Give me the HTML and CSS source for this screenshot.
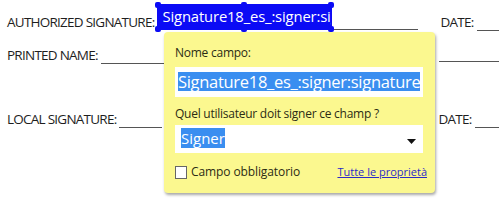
FILE: index.html
```html
<!DOCTYPE html>
<html lang="it">
<head>
    <meta charset="UTF-8">
    <title>Campo firma</title>
    <link rel="stylesheet" href="styles.css">
</head>
<body>

    <!-- Form page -->
    <div class="form">
        <div class="row row-auth">
            <span class="label">AUTHORIZED SIGNATURE:</span>
            <span class="sig-field">
                <span class="sig-text">Signature18_es_:signer:signature</span>
                <i class="handle tl"></i><i class="handle tm"></i><i class="handle tr"></i>
                <i class="handle bl"></i><i class="handle bm"></i><i class="handle br"></i>
            </span>
            <span class="line line-sig"></span>
            <span class="label date">DATE:</span>
            <span class="line grow"></span>
        </div>

        <div class="row row-name">
            <span class="label">PRINTED NAME:</span>
            <span class="line line-name"></span>
            <span class="gap"></span>
            <span class="line grow"></span>
        </div>

        <div class="row row-local">
            <span class="label">LOCAL SIGNATURE:</span>
            <span class="line line-local"></span>
            <span class="gap"></span>
            <span class="label">DATE:</span>
            <span class="line grow"></span>
        </div>
    </div>

    <!-- Field popup -->
    <div class="popup">
        <div class="popup-label">Nome campo:</div>
        <div class="text-box"><span class="selected">Signature18_es_:signer:signature</span></div>

        <div class="popup-label second">Quel utilisateur doit signer ce champ ?</div>
        <div class="select-box">
            <span class="selected">Signer</span>
            <svg class="arrow" width="9" height="5" viewBox="0 0 9 5"><path d="M0 0h9L4.5 5z" fill="#111"/></svg>
        </div>

        <div class="popup-footer">
            <label class="check"><span class="box"></span>Campo obbligatorio</label>
            <a href="#" class="all-props">Tutte le proprietà</a>
        </div>
    </div>

</body>
</html>
```

FILE: styles.css
```css
body {
    margin: 0;
    background: #fff;
    font-family: "Open Sans", Arial, sans-serif;
    color: #333;
    width: 499px;
    height: 204px;
    overflow: hidden;
    position: relative;
}
.form {
    padding-left: 7px;
}
.row {
    display: flex;
    align-items: flex-end;
}
.row-auth {
    height: 31px;
}
.row-name {
    height: 33px;
}
.row-local {
    height: 64px;
}
.label {
    font-size: 13.5px;
    letter-spacing: -0.75px;
    line-height: 15px;
    color: #1e1e1e;
    white-space: nowrap;
    padding-bottom: 1px;
}
.line {
    border-bottom: 1px solid #555;
    height: 0;
}
.line-sig {
    width: 86px;
    margin-bottom: 1px;
}
.line-name {
    width: 63px;
    margin-left: 3px;
}
.line-local {
    width: 43px;
    margin-left: 2px;
}
.gap {
    width: 272px;
}
.row-local .gap {
    width: 277px;
}
.date {
    margin-left: 23px;
}
.grow {
    flex: 1;
    margin-left: 3px;
}
.row-name .grow {
    margin-bottom: 2px;
}
.sig-field {
    position: relative;
    width: 175px;
    height: 26px;
    margin-left: 2px;
    margin-bottom: 1px;
    background: #0b0bf5;
    border-radius: 3px;
    color: #fff;
    box-sizing: border-box;
    padding: 0 1px 0 6px;
}
.sig-text {
    display: block;
    overflow: hidden;
    white-space: nowrap;
    font-size: 14.8px;
    line-height: 24px;
    letter-spacing: -0.15px;
}
.handle {
    position: absolute;
    width: 6px;
    height: 6px;
    background: #0b0bf5;
    border-radius: 2px;
}
.tl { left: -2px; top: -2px; }
.tm { left: 84px; top: -2px; }
.tr { right: -2px; top: -2px; }
.bl { left: -2px; bottom: -2px; }
.bm { left: 84px; bottom: -2px; }
.br { right: -2px; bottom: -2px; }

/* popup */
.popup {
    position: absolute;
    left: 164px;
    top: 32px;
    width: 271px;
    height: 161px;
    box-sizing: border-box;
    padding: 13px 11px 0 11px;
    background: #fbf88f;
    border-radius: 4px;
    box-shadow: 1px 2px 3px rgba(0, 0, 0, 0.35);
    color: #2c2c14;
}
.popup-label {
    font-size: 12px;
    line-height: 15px;
    letter-spacing: -0.25px;
}
.popup-label.second {
    margin-top: 9px;
}
.text-box {
    margin-top: 7px;
    height: 30px;
    width: 248px;
    background: #fff;
    box-sizing: border-box;
    padding: 4px 0 0 3px;
    overflow: hidden;
}
.text-box .selected {
    font-size: 16.5px;
    line-height: 19px;
    letter-spacing: -0.3px;
    white-space: nowrap;
}
.selected {
    background: #3a8ef0;
    color: #fff;
    display: inline-block;
}
.select-box {
    margin-top: 4px;
    height: 28px;
    width: 248px;
    background: #fff;
    box-sizing: border-box;
    padding: 3px 0 0 6px;
    display: flex;
    align-items: flex-start;
    justify-content: space-between;
}
.select-box .selected {
    font-size: 15px;
    line-height: 20px;
}
.arrow {
    margin: 11px 7px 0 0;
}
.popup-footer {
    margin-top: 11px;
    display: flex;
    justify-content: space-between;
    align-items: center;
    width: 252px;
    line-height: 16px;
}
.check {
    display: flex;
    align-items: center;
    font-size: 12px;
    letter-spacing: -0.1px;
}
.box {
    width: 10px;
    height: 11px;
    border: 1px solid #666;
    background: #fff;
    margin-right: 4px;
}
.all-props {
    font-size: 11px;
    color: #2b2bc8;
    text-decoration: underline;
}
```
